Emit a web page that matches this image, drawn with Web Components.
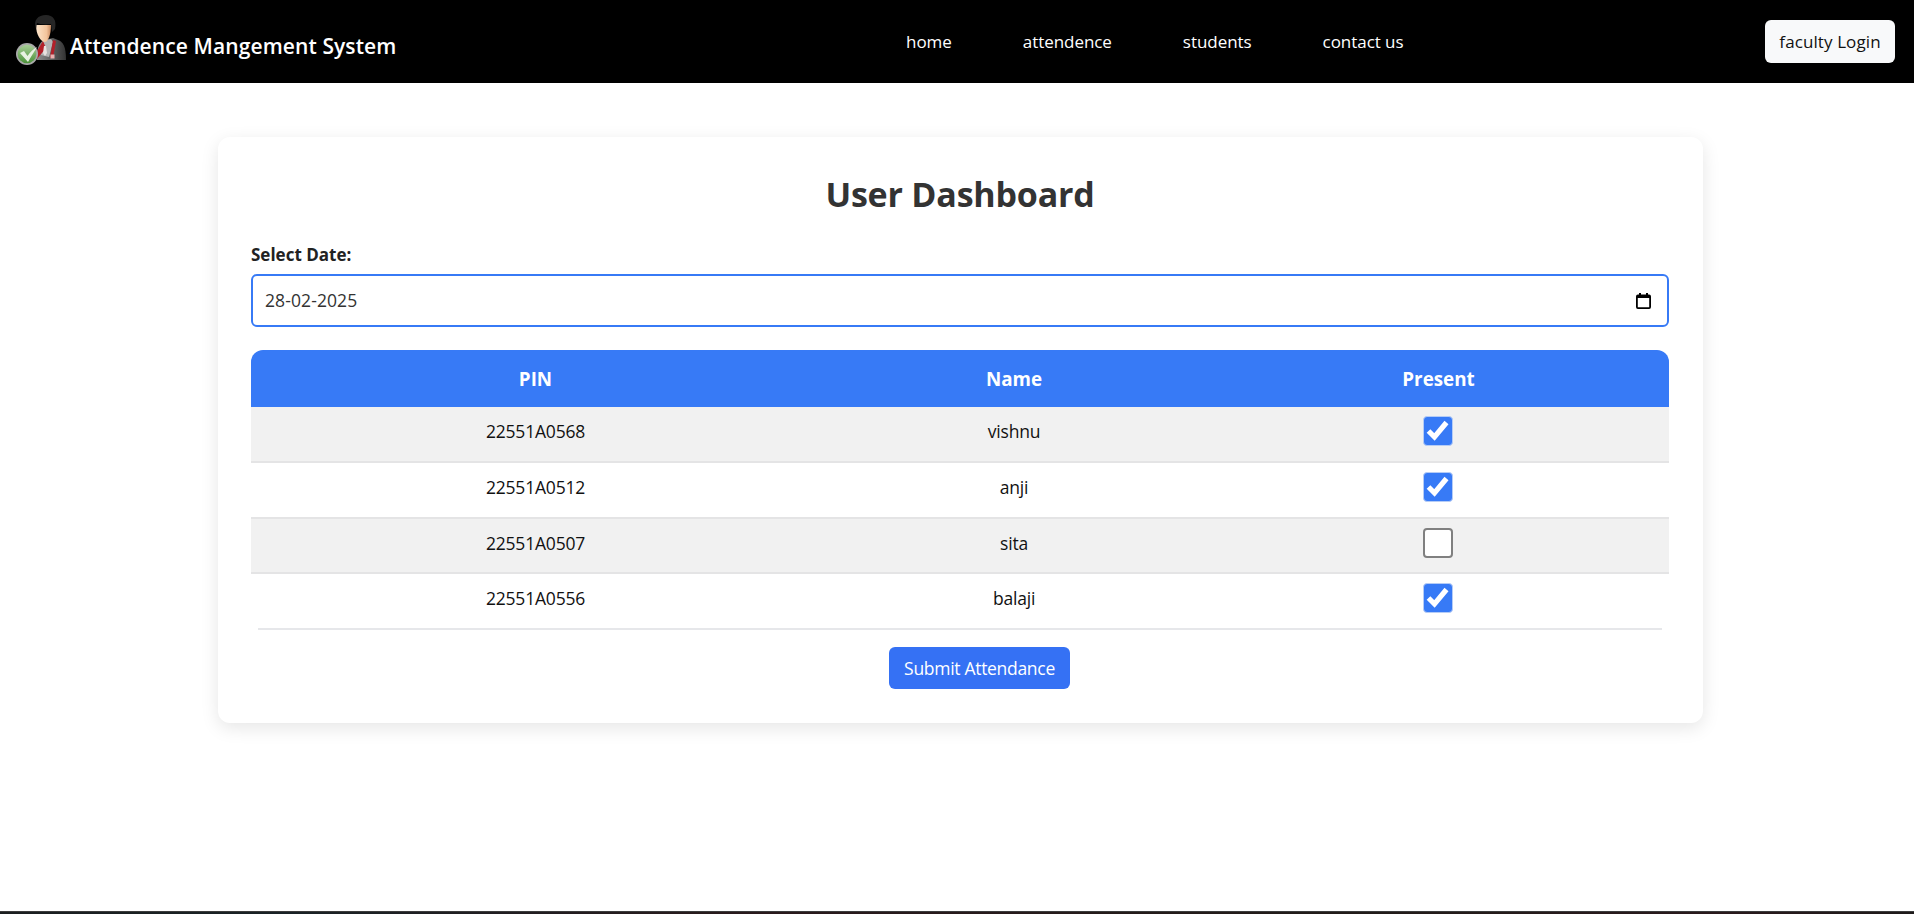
<!DOCTYPE html>
<html>
<head>
<meta charset="utf-8">
<title>Attendence Mangement System</title>
<style>
  html, body { margin: 0; padding: 0; background: #fff; }
  body { font-family: "Open Sans", "Noto Sans", sans-serif; height: 914px; overflow: hidden; display: flex; flex-direction: column; }
  page-main { flex: 1; }
</style>
</head>
<body>
<template id="nav-tpl">
  <style>
    :host { display: flex; height: 83px; background: #000; color: #fff; }
    .brand { display: flex; align-items: flex-start; padding: 15px 0 0 15px; width: 906px; box-sizing: border-box; flex: none; }
    .brand svg { width: 52px; height: 52px; flex: none; }
    .brand span { font-size: 21px; line-height: 29px; font-weight: 600; margin: 16.5px 0 0 3px; letter-spacing: .1px; white-space: nowrap; }
    nav { display: flex; gap: 71px; font-size: 17px; letter-spacing: -.05px; align-items: center; }
    .right { margin-left: auto; display: flex; align-items: center; padding-right: 19px; }
    button { font: inherit; font-size: 17px; letter-spacing: .1px; height: 43px; width: 130px; padding: 0; border: 0; border-radius: 6px; background: #f8f9fa; color: #111; }
  </style>
  <div class="brand">
    <svg viewBox="0 0 52 52">
      <defs>
        <linearGradient id="suit" x1="0" x2="1"><stop offset="0" stop-color="#8f8f8f"/><stop offset="1" stop-color="#333"/></linearGradient>
        <linearGradient id="face" x1="0" x2="1"><stop offset="0" stop-color="#fde6cc"/><stop offset=".7" stop-color="#f3c49c"/><stop offset="1" stop-color="#c98a60"/></linearGradient>
        <linearGradient id="badge" x1="0" y1="0" x2="0" y2="1"><stop offset="0" stop-color="#a9cf98"/><stop offset="1" stop-color="#4a9138"/></linearGradient>
      </defs>
      <path d="M22 45 C21 33 25 27 29 25 L38 23 L43 25 C48 27 51 31 51 45 Z" fill="url(#suit)"/>
      <path d="M28 26 L36 24 L38 27 L34 42 L26 40 Z" fill="#b4b4b4"/>
      <path d="M28 26 L31 33 L22 44 L19 41 Z" fill="#b3202a"/>
      <path d="M38 25 L41 26 L38 43 L35 43 Z" fill="#b3202a"/>
      <path d="M29 31 L31 31 L32 38 L30 41 L28 38 Z" fill="#e9e2e0"/>
      <path d="M21 10 C21 20 26 27 30 27 C33 27 36 20 36 10 Z" fill="url(#face)"/>
      <path d="M21 14 C18 5 23 0 31 0 C38 0 42 5 40 14 L37 17 L36 9 C30 10 24 9 22 8 Z" fill="#262626"/>
      <rect x="35.5" y="39.5" width="4" height="4" fill="#e8b0b0"/>
      <circle cx="12" cy="39" r="11" fill="#a9a9a9"/>
      <circle cx="12" cy="39" r="9.3" fill="url(#badge)"/>
      <path d="M5 38 L9 36 L12.5 41 C15 37 18.500 34 22 32 C19 37 15 43 13 47 Z" fill="#e9f2e2"/>
    </svg>
    <span>Attendence Mangement System</span>
  </div>
  <nav><span>home</span><span>attendence</span><span>students</span><span>contact us</span></nav>
  <div class="right"><button>faculty Login</button></div>
</template>

<template id="card-tpl">
  <style>
    :host { display: block; width: 1485px; box-sizing: border-box; margin: 54px 0 0 218px; padding: 30px 34px 34px 33px; background: #fff; border-radius: 12px; box-shadow: 0 5px 18px rgba(0,0,0,.1); color: #111; }
    h2 { margin: 0 0 21px; height: 54px; line-height: 54px; text-align: center; font-size: 34px; font-weight: 700; color: #333; letter-spacing: -.2px; }
    label { display: block; font-size: 17px; font-weight: 700; height: 26px; line-height: 26px; margin-bottom: 6px; letter-spacing: 0; color: #222; }
    .date { display: flex; align-items: center; justify-content: space-between; height: 53px; box-sizing: border-box; border: 2px solid #377af6; border-radius: 6px; padding: 0 11px 0 12px; font-size: 17.5px; color: #333; letter-spacing: .1px; margin-bottom: 23px; }
    .date span { position: relative; top: -1px; }
    .date svg { width: 15px; height: 16px; margin-right: 5px; }
    .foot { display: flex; justify-content: center; padding: 17px 0 0 39px; }
    button { font: inherit; font-size: 17.5px; letter-spacing: -.3px; width: 181px; height: 42px; padding: 0; border: 0; border-radius: 6px; background: #3571f4; color: #fff; }
  </style>
  <h2>User Dashboard</h2>
  <label>Select Date:</label>
  <div class="date"><span>28-02-2025</span>
    <svg viewBox="0 0 15 16"><rect x=".9" y="2.4" width="13.200" height="12.700" rx="1" fill="none" stroke="#000" stroke-width="1.800"/><path d="M1 3 H14 V5 H1 Z M3 0 H5 V3 H3 Z M10 0 H12 V3 H10 Z" fill="#000"/></svg>
  </div>
  <slot></slot>
  <div class="foot"><button>Submit Attendance</button></div>
</template>

<template id="table-tpl">
  <style>
    :host { display: block; position: relative; padding-bottom: 2px; }
    .head { display: grid; grid-template-columns: 569px 388px 1fr; text-align: center; align-items: center; height: 57px; background: #377af6; color: #fff; font-weight: 700; font-size: 18.800px; border-radius: 12px 12px 0 0; }
    .line { height: 2px; background: #e6e7ea; margin: 0 7px; position: absolute; left: 0; right: 0; bottom: 0; }
  </style>
  <div class="head"><span>PIN</span><span>Name</span><span>Present</span></div>
  <slot></slot>
  <div class="line"></div>
</template>

<template id="row-tpl">
  <style>
    :host { display: grid; grid-template-columns: 569px 388px 1fr; align-items: start; text-align: center; height: 56px; padding-top: 9px; box-sizing: border-box; font-size: 17.5px; line-height: 30px; letter-spacing: -.2px; color: #111; border-bottom: 2px solid #e4e4e5; }
    :host([shade]) { background: #f1f1f1; }
    :host(:nth-child(3)) { height: 55px; }
    :host([last]) { border-bottom: 0; height: 54px; }
    .box { width: 30px; height: 30px; margin: 0 auto; box-sizing: border-box; border-radius: 4px; border: 2px solid #808080; background: #fff; position: relative; left: -1px; }
    .box.on { background: #377af6; border: 1px solid #b5ccf6; }
    svg { display: block; width: 100%; height: 100%; }
  </style>
  <span id="pin"></span><span id="name"></span>
  <div class="box" id="box"></div>
</template>

<script>
function tpl(id) { return document.getElementById(id).content.cloneNode(true) }

class AppNav extends HTMLElement {
  constructor() {
    super()
    this.attachShadow({ mode: 'open' }).appendChild(tpl('nav-tpl'))
  }
}
class DashCard extends HTMLElement {
  constructor() {
    super()
    this.attachShadow({ mode: 'open' }).appendChild(tpl('card-tpl'))
  }
}
class AttendanceTable extends HTMLElement {
  constructor() {
    super()
    this.attachShadow({ mode: 'open' }).appendChild(tpl('table-tpl'))
  }
}
class AttendanceRow extends HTMLElement {
  constructor() {
    super()
    this.attachShadow({ mode: 'open' }).appendChild(tpl('row-tpl'))
  }
  connectedCallback() {
    const $root = this.shadowRoot
    $root.getElementById('pin').textContent = this.getAttribute('pin')
    $root.getElementById('name').textContent = this.getAttribute('name')
    if (this.hasAttribute('checked')) {
      const $box = $root.getElementById('box')
      $box.classList.add('on')
      $box.innerHTML = '<svg viewBox="0 0 28 28"><path d="M4.500 14 L10.500 20 L22.500 5.500" fill="none" stroke="#fff" stroke-width="5.200"/></svg>'
    }
  }
}
class BottomStrip extends HTMLElement {
  constructor() {
    super()
    this.attachShadow({ mode: 'open' }).innerHTML = `
      <style>
        :host { display: block; height: 2px; background: linear-gradient(90deg, #1b1f20, #1a2226 15%, #2a1a1c 40%, #221c1a 70%, #2a1a1c 90%, #1e1a1a); border-top: 1px solid #3d3d3d; }
      </style>`
  }
}
customElements.define('app-nav', AppNav)
customElements.define('dash-card', DashCard)
customElements.define('attendance-table', AttendanceTable)
customElements.define('attendance-row', AttendanceRow)
customElements.define('bottom-strip', BottomStrip)
</script>

<app-nav></app-nav>
<page-main>
  <dash-card>
    <attendance-table>
      <attendance-row shade pin="22551A0568" name="vishnu" checked></attendance-row>
      <attendance-row pin="22551A0512" name="anji" checked></attendance-row>
      <attendance-row shade pin="22551A0507" name="sita"></attendance-row>
      <attendance-row last pin="22551A0556" name="balaji" checked></attendance-row>
    </attendance-table>
  </dash-card>
</page-main>
<bottom-strip></bottom-strip>
</body>
</html>
